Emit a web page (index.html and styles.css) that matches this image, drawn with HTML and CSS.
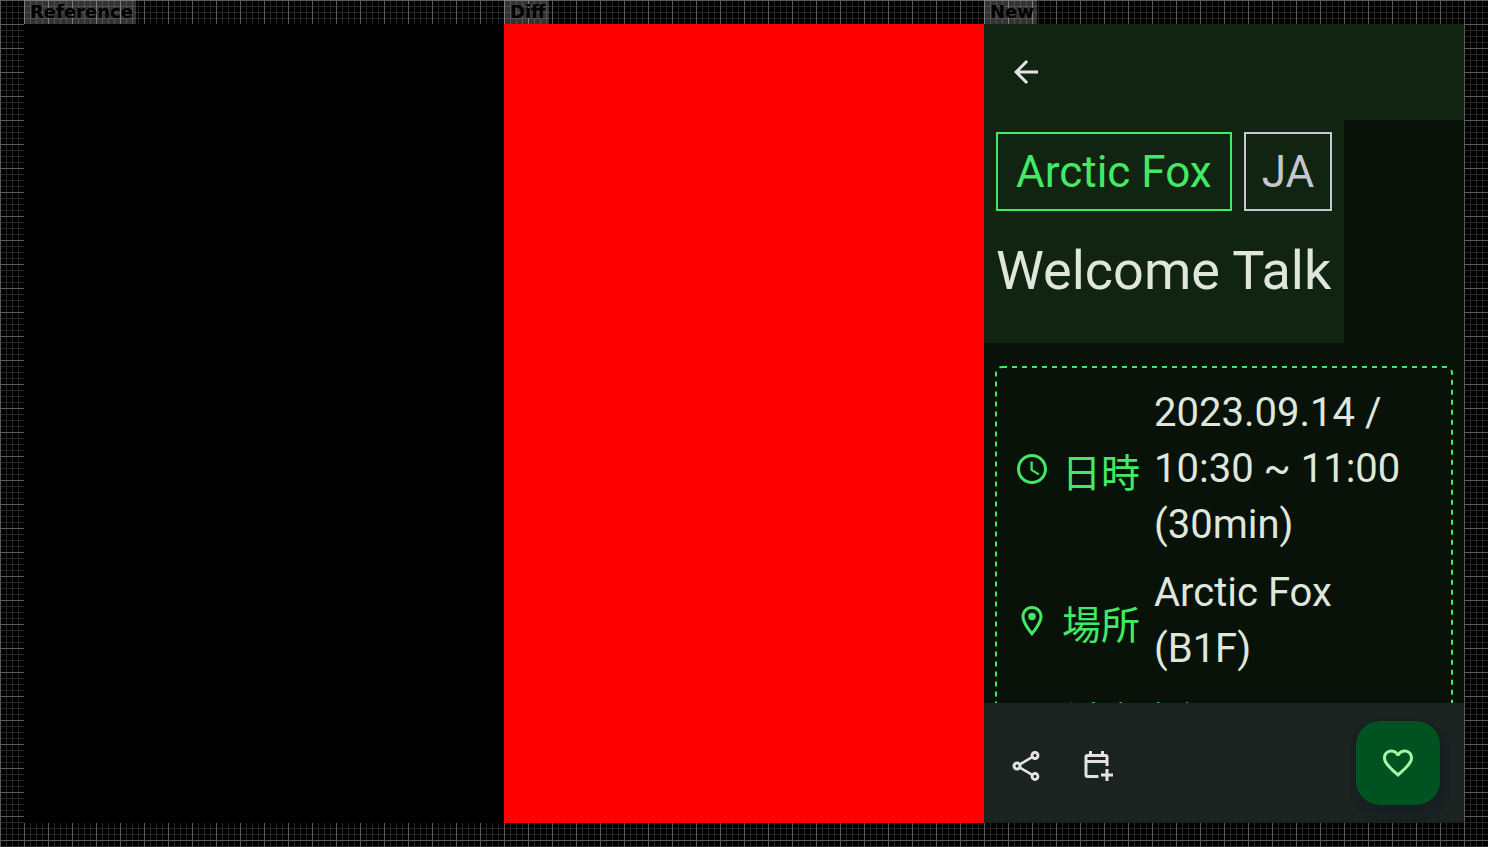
FILE: index.html
```html
<!DOCTYPE html>
<html lang="en">
<head>
<meta charset="utf-8">
<meta name="viewport" content="width=device-width, initial-scale=1">
<title>Screenshot comparison</title>
<link rel="stylesheet" href="styles.css">
</head>
<body>
<main class="compare">
  <section class="pane">
    <h2 class="pane-label">Reference</h2>
    <div class="pane-body pane-empty"></div>
  </section>
  <section class="pane">
    <h2 class="pane-label">Diff</h2>
    <div class="pane-body pane-diff"></div>
  </section>
  <section class="pane">
    <h2 class="pane-label">New</h2>
    <div class="pane-body screen">
      <header class="top-bar">
        <button class="icon-button" type="button" aria-label="Back">
          <svg class="icon" viewBox="0 0 24 24"><path d="M20 11H7.83l5.59-5.59L12 4l-8 8 8 8 1.41-1.41L7.83 13H20v-2z"/></svg>
        </button>
      </header>
      <div class="content">
        <div class="session-head">
          <div class="chips">
            <span class="chip chip-room">Arctic Fox</span>
            <span class="chip chip-lang">JA</span>
          </div>
          <h1 class="session-title">Welcome Talk</h1>
        </div>
        <div class="info-card">
          <svg class="dashes" aria-hidden="true"><rect width="100%" height="100%" rx="6"/></svg>
          <dl class="info-list">
            <div class="info-row">
              <svg class="icon" viewBox="0 0 24 24"><path d="M11.99 2C6.47 2 2 6.48 2 12s4.47 10 9.99 10C17.52 22 22 17.52 22 12S17.52 2 11.99 2zM12 20c-4.42 0-8-3.58-8-8s3.58-8 8-8 8 3.58 8 8-3.58 8-8 8zm.5-13H11v6l5.25 3.15.75-1.23-4.5-2.67z"/></svg>
              <dt class="info-label">日時</dt>
              <dd class="info-value">2023.09.14 / 10:30 ~ 11:00 (30min)</dd>
            </div>
            <div class="info-row">
              <svg class="icon" viewBox="0 0 24 24"><path d="M12 2C8.13 2 5 5.13 5 9c0 5.25 7 13 7 13s7-7.75 7-13c0-3.87-3.13-7-7-7zM7 9c0-2.76 2.24-5 5-5s5 2.24 5 5c0 2.88-2.88 7.19-5 9.88C9.92 16.21 7 11.85 7 9z"/><circle cx="12" cy="9" r="2.5"/></svg>
              <dt class="info-label">場所</dt>
              <dd class="info-value">Arctic Fox (B1F)</dd>
            </div>
            <div class="info-row">
              <span class="icon"></span>
              <dt class="info-label">対応言語</dt>
              <dd class="info-value"></dd>
            </div>
          </dl>
        </div>
      </div>
      <footer class="bottom-bar">
        <button class="icon-button" type="button" aria-label="Share">
          <svg class="icon" viewBox="0 0 24 24"><path d="M18 16.08c-.76 0-1.44.3-1.96.77L8.91 12.7c.05-.23.09-.46.09-.7s-.04-.47-.09-.7l7.05-4.11c.54.5 1.25.81 2.04.81 1.66 0 3-1.34 3-3s-1.34-3-3-3-3 1.34-3 3c0 .24.04.47.09.7L8.04 9.81C7.5 9.31 6.79 9 6 9c-1.66 0-3 1.34-3 3s1.34 3 3 3c.79 0 1.5-.31 2.04-.81l7.12 4.16c-.05.21-.08.43-.08.65 0 1.61 1.31 2.92 2.92 2.92s2.92-1.31 2.92-2.92-1.31-2.92-2.92-2.92zM18 4c.55 0 1 .45 1 1s-.45 1-1 1-1-.45-1-1 .45-1 1-1zM6 13c-.55 0-1-.45-1-1s.45-1 1-1 1 .45 1 1-.45 1-1 1zm12 7.02c-.55 0-1-.45-1-1s.45-1 1-1 1 .45 1 1-.45 1-1 1z"/></svg>
        </button>
        <button class="icon-button" type="button" aria-label="Add to calendar">
          <svg class="icon icon-line" viewBox="0 0 24 24"><path d="M12.3 19H5q-1 0-1-1V6q0-1 1-1h12q1 0 1 1v6M4 9h14M7 2v3M15 2v3M18 14v8M14 18h8"/></svg>
        </button>
        <button class="fab" type="button" aria-label="Bookmark">
          <svg class="icon" viewBox="0 0 24 24"><path d="M16.5 3c-1.74 0-3.41.81-4.5 2.09C10.91 3.81 9.24 3 7.5 3 4.42 3 2 5.42 2 8.5c0 3.78 3.4 6.86 8.55 11.54L12 21.35l1.45-1.32C18.6 15.36 22 12.28 22 8.5 22 5.42 19.58 3 16.5 3zm-4.4 15.55l-.1.1-.1-.1C7.14 14.24 4 11.39 4 8.5 4 6.5 5.5 5 7.5 5c1.54 0 3.04.99 3.57 2.36h1.87C13.46 5.99 14.96 5 16.5 5c2 0 3.5 1.5 3.5 3.5 0 2.89-3.14 5.74-7.9 10.05z"/></svg>
        </button>
      </footer>
    </div>
  </section>
</main>
</body>
</html>
```
FILE: styles.css
```css
* { box-sizing: border-box; }

body {
  margin: 0;
  background-color: #000;
  background-image:
    linear-gradient(#5a5a5a 1px, transparent 1px),
    linear-gradient(90deg, #5a5a5a 1px, transparent 1px),
    linear-gradient(#272727 1px, transparent 1px),
    linear-gradient(90deg, #272727 1px, transparent 1px);
  background-size: 24px 24px, 24px 24px, 6px 6px, 6px 6px;
  font-family: Roboto, "Noto Sans CJK SC", sans-serif;
}

.compare {
  display: grid;
  grid-template-columns: repeat(3, minmax(0, 1fr));
  height: 100vh;
  padding: 0 24px 24px;
}

.pane {
  display: flex;
  flex-direction: column;
  align-items: flex-start;
  min-height: 0;
}

.pane-label {
  margin: 0;
  padding: 0 3px 0 6px;
  background: rgba(255, 255, 255, 0.2);
  color: #000;
  font: bold 18px/24px "DejaVu Sans", sans-serif;
}

.pane-body {
  flex: 1;
  align-self: stretch;
  min-height: 0;
}

.pane-empty { background: #000; }
.pane-diff { background: #f00; }

.screen {
  display: flex;
  flex-direction: column;
  background: #081208;
  color: #dfe7dd;
}

.icon {
  flex: none;
  display: block;
  width: 36px;
  height: 36px;
  fill: currentColor;
}

.icon-line {
  fill: none;
  stroke: currentColor;
  stroke-width: 2;
}

.icon-button {
  display: grid;
  place-items: center;
  width: 72px;
  height: 72px;
  padding: 0;
  border: 0;
  background: none;
  color: #e6e1e5;
}

.top-bar {
  padding: 12px 6px;
  background: #112311;
}

.content {
  flex: 1;
  min-height: 0;
  overflow: hidden;
}

.session-head {
  width: fit-content;
  padding: 12px 12px 36px;
  background: #112311;
}

.chips {
  display: flex;
  gap: 12px;
}

.chip {
  padding: 7px 18px 5px;
  border: 2px solid;
  font-size: 44px;
  line-height: 63px;
}

.chip-room {
  flex: 1;
  color: #43e964;
}

.chip-lang {
  padding-inline: 16px;
  color: #c4c7cf;
}

.session-title {
  margin: 24px 0 0;
  font-size: 54px;
  font-weight: 400;
  line-height: 72px;
}

.info-card {
  position: relative;
  margin: 24px 12px;
  padding: 18px;
}

.dashes {
  position: absolute;
  inset: 0;
  width: 100%;
  height: 100%;
  overflow: visible;
  fill: none;
  stroke: #43e964;
  stroke-width: 2;
  stroke-dasharray: 5 5;
}

.info-list {
  display: grid;
  gap: 12px;
  margin: 0;
}

.info-row {
  display: flex;
  align-items: center;
  gap: 12px;
  color: #43e964;
}

.info-label {
  padding-top: 2px;
  font: 39px/50px "Noto Sans CJK SC", sans-serif;
  white-space: nowrap;
}

.info-value {
  margin: 0;
  padding-left: 2px;
  min-height: 56px;
  color: #dfe7dd;
  font-size: 40px;
  line-height: 56px;
}

.bottom-bar {
  display: flex;
  align-items: center;
  padding: 18px 24px 18px 6px;
  overflow: hidden;
  background: #1b2321;
}

.bottom-bar .icon-button { margin-top: 6px; }

.fab {
  display: grid;
  place-items: center;
  width: 84px;
  height: 84px;
  margin-left: auto;
  padding: 0;
  border: 0;
  border-radius: 24px;
  background: #005320;
  box-shadow: 0 2px 4px #161e20, 2px 8px 0 8px #192022;
  color: #a3f8a8;
}
```
